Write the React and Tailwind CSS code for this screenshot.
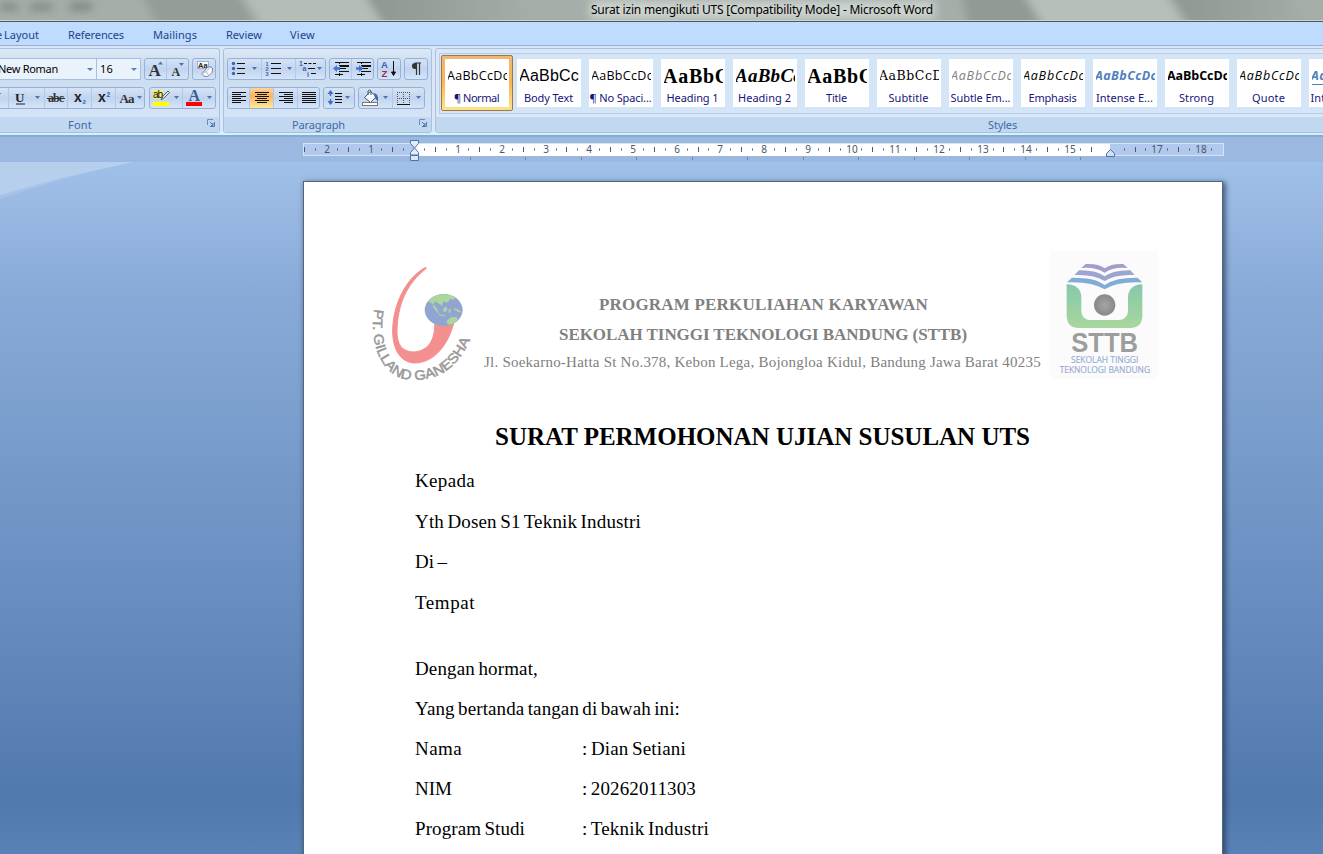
import React, { useLayoutEffect, useRef, useState } from "react";

const UI = "font-['Noto_Sans','Open_Sans',sans-serif]";
const SERIF = "font-['Liberation_Serif',serif]";

/* Text tracked so that it fills a given width. */
function Fit({ w, className = "", children }) {
  const ref = useRef(null);
  const [gap, setGap] = useState(0);
  useLayoutEffect(() => {
    const natural = ref.current.getBoundingClientRect().width;
    setGap((w - natural) / children.length);
  }, []);
  return (
    <span ref={ref} className={"inline-block whitespace-pre " + className} style={{ letterSpacing: gap + "px" }}>
      {children}
    </span>
  );
}

function Tri({ x, y, up }) {
  return <path d={up ? `M${x - 2.5} ${y + 1.5}h5l-2.5 -3z` : `M${x - 2.5} ${y - 1.5}h5l-2.5 3z`} fill="#4a72b0" />;
}

/* A framed strip of tool buttons; the art uses the strip's horizontal coordinates. */
function Cluster({ x, w, dividers = [], active, className = "", children }) {
  return (
    <div
      className={
        "h-[22px] shrink-0 overflow-hidden rounded-[3px] border border-[#93b1dc] bg-linear-to-b from-[#d6e3f4] from-0% via-[#c1d4ef] via-50% to-[#d5e4f7] " + className
      }
      style={{ width: w }}
    >
      <svg className="-ml-px -mt-px block h-[22px]" width={w} viewBox={`${x} 0 ${w} 22`}>
        {active && <rect x={active[0]} y="1" width={active[1]} height="20" fill="url(#glow)" />}
        {dividers.map((d) => (
          <path key={d} d={`M${d + 0.5} 1v20`} stroke="#b0c8ea" />
        ))}
        {children}
      </svg>
    </div>
  );
}

const lines = (rows, stroke = "#111") =>
  rows.map(([x, y, w], i) => <path key={i} d={`M${x} ${y + 0.5}h${w}`} stroke={stroke} />);

function FontGroup() {
  return (
    <Group title="Font" w={220} titleW={24} titlePad="pl-[68px]" launcher first>
      <div className="flex gap-[3px]">
        <div className="flex">
          <div className={"flex h-[22px] w-[97px] items-center border border-l-0 border-[#a5c0e4] bg-[#eaf2fb] text-[11px] text-black " + UI}>
            <Fit w={60} className="ml-[-2px]">New Roman</Fit>
            <svg className="ml-[29px]" width="6" height="5" viewBox="0 0 6 5"><path d="M0 1h6l-3 3z" fill="#5a7fb8" /></svg>
          </div>
          <div className={"flex h-[22px] w-[44px] items-center border border-l-0 border-[#a5c0e4] bg-[#eaf2fb] pl-[3px] text-[11px] text-black " + UI}>
            <Fit w={13}>16</Fit>
            <svg className="ml-[18px]" width="6" height="5" viewBox="0 0 6 5"><path d="M0 1h6l-3 3z" fill="#5a7fb8" /></svg>
          </div>
        </div>
        <Cluster x={144} w={45} dividers={[166]}>
          <text x="148.5" y="17.5" fontFamily="Liberation Serif" fontWeight="700" fontSize="17" fill="#333">A</text>
          <Tri x={160.5} y={5} up />
          <text x="171.5" y="17.5" fontFamily="Liberation Serif" fontWeight="700" fontSize="12" fill="#333">A</text>
          <Tri x={181.5} y={6.5} />
        </Cluster>
        <Cluster x={192} w={24}>
          <rect x="197.500" y="3.500" width="11" height="7" fill="#f5f8fc" stroke="#8a97ad" strokeWidth=".7" />
          <text x="198" y="10" fontFamily="Liberation Sans" fontSize="7.500" fontWeight="700" fill="#222">Aa</text>
          <path d="M202 15.500l5.500-6q4-2 5 1.500t-3.500 6.500q-4.500 3-7-2z" fill="#fafbfd" stroke="#6d7e9b" strokeWidth=".9" />
          <path d="M203 15l3-1.500 2 3M206 13.500l5.500-5" stroke="#a4b2c9" fill="none" />
        </Cluster>
      </div>
      <div className="flex gap-[4px]">
        <Cluster x={-4} w={149} className="ml-[-4px]" dividers={[8, 44, 67, 91, 115]}>
          <text x="-5" y="15.5" fontFamily="Liberation Serif" fontStyle="italic" fontWeight="700" fontSize="14" fill="#222">I</text>
          <text x="15" y="14.5" fontFamily="Liberation Serif" fontWeight="700" fontSize="13" fill="#222">U</text>
          <path d="M16 17h9" stroke="#222" strokeWidth="1" />
          <Tri x={37.5} y={10.5} />
          <text x="48" y="15" fontFamily="Liberation Serif" fontWeight="700" fontSize="12" fill="#333" textLength="16">abc</text>
          <path d="M47 11.5h18" stroke="#333" />
          <text x="74" y="15" fontFamily="Liberation Sans" fontWeight="700" fontSize="14" fill="#222">x</text>
          <text x="82.5" y="16.5" fontFamily="Liberation Sans" fontWeight="700" fontSize="6" fill="#2f5fb5">2</text>
          <text x="98" y="15" fontFamily="Liberation Sans" fontWeight="700" fontSize="14" fill="#222">x</text>
          <text x="106.5" y="9.5" fontFamily="Liberation Sans" fontWeight="700" fontSize="6.5" fill="#2f5fb5">2</text>
          <text x="119.5" y="15.5" fontFamily="Liberation Serif" fontWeight="700" fontSize="13" fill="#333" textLength="15">Aa</text>
          <Tri x={139.5} y={10.5} />
        </Cluster>
        <Cluster x={149} w={67} dividers={[182]}>
          <rect x="153" y="3" width="10" height="9" fill="#f4ee6c" />
          <text x="153" y="10.5" fontFamily="Liberation Sans" fontSize="10" fontWeight="400" fill="#111" textLength="10">ab</text>
          <path d="M161 13l2-4 5-5 1.5 1.5-5 5z" fill="#dfe6ef" stroke="#444f60" strokeWidth=".9" />
          <rect x="153" y="15" width="16" height="4" fill="#ff0" />
          <Tri x={176.5} y={10.5} />
          <text x="188.5" y="13.5" fontFamily="Liberation Serif" fontWeight="700" fontSize="16" fill="#3c5a94">A</text>
          <rect x="186" y="15" width="16" height="4" fill="#f00" />
          <Tri x={209.5} y={10.5} />
        </Cluster>
      </div>
    </Group>
  );
}

function ParagraphGroup() {
  return (
    <Group title="Paragraph" w={209} titleW={53} titlePad="pl-[68px]" launcher className="pl-[3px]">
      <div className="flex gap-[3px]">
        <Cluster x={227} w={99} dividers={[261, 295]}>
          {[5, 10, 15].map((y) => (
            <g key={y}>
              <circle cx="233.5" cy={y + 0.5} r="1.7" fill="#3b64ad" />
              <path d={`M237 ${y + 0.5}h8`} stroke="#111" />
            </g>
          ))}
          <Tri x={254.5} y={10.5} />
          {["1", "2", "3"].map((n, i) => (
            <text key={n} x="265.5" y={7.5 + i * 5} fontFamily="Liberation Sans" fontWeight="700" fontSize="5.5" fill="#3b64ad">{n}</text>
          ))}
          {lines([[271, 5, 10], [271, 10, 10], [271, 15, 10]])}
          <Tri x={289.5} y={10.5} />
          <g fontFamily="Liberation Sans" fontWeight="700" fontSize="7" fill="#3b64ad">
            <text x="299" y="7.5">1</text><text x="302.5" y="13">a</text><text x="307" y="18.5">i</text>
          </g>
          <path d="M304 5.5h12" stroke="#111" strokeDasharray="3 1.500" />
          <path d="M308 10.500h7M311 15.5h5" stroke="#111" />
          <Tri x={319.5} y={10.5} />
        </Cluster>
        <Cluster x={329} w={45} dividers={[351]}>
          {[0, 22].map((d) => (
            <g key={d}>
              {lines([[335 + d, 4, 14], [340 + d, 7, 9], [340 + d, 10, 6], [340 + d, 13, 9], [335 + d, 16, 8]])}
              <path d={`M${339.5 + d} 5v13`} stroke="#111" strokeDasharray="1 1" />
              <path d={`M${340 + d} 7h9v2h-9z`} fill="#111" />
            </g>
          ))}
          <path d="M333 10.5l4-3.5v2.3h3v2.4h-3v2.3z" fill="#4377cf" />
          <path d="M363 10.5l-4-3.5v2.3h-3v2.4h3v2.3z" fill="#4377cf" />
        </Cluster>
        <Cluster x={377} w={24}>
          <text x="381" y="10" fontFamily="Liberation Sans" fontWeight="700" fontSize="9.5" fill="#3b5fae">A</text>
          <text x="381.5" y="18.5" fontFamily="Liberation Sans" fontWeight="700" fontSize="9.5" fill="#9c2f3a">Z</text>
          <path d="M393.5 3v13M391.5 14l2 3.500 2-3.500z" stroke="#111" fill="#111" />
        </Cluster>
        <Cluster x={404} w={24}>
          <path d="M421 5h-6a3 3 0 0 0 0 6h1.500V5z" fill="#333" />
          <path d="M421 5h-6M416.500 5v12M419.500 5v12" stroke="#333" strokeWidth="1.200" fill="none" />
        </Cluster>
      </div>
      <div className="flex gap-[3px]">
        <Cluster x={227} w={93} dividers={[249, 273, 297]} active={[250, 23]}>
          {[5, 7, 9, 11, 13, 15].map((y, i) => {
            const s = i % 2 === 1;
            return <g key={y}>{lines([[232, y, s ? 9 : 14], [s ? 257 : 255, y, s ? 10 : 14], [s ? 284 : 279, y, s ? 9 : 14], [302, y, 14]])}</g>;
          })}
        </Cluster>
        <Cluster x={323} w={32}>
          <path d="M330.500 4v5M330.500 12v5" stroke="#3b6fc8" strokeWidth="1.500" />
          <path d="M327.500 7l3-4 3 4zM327.500 14l3 4 3-4z" fill="#3b6fc8" />
          {lines([[335, 6, 7], [335, 9, 7], [335, 12, 7], [335, 15, 7]])}
          <Tri x={347.5} y={10.5} />
        </Cluster>
        <Cluster x={358} w={67} dividers={[392]}>
          <path d="M364.500 10.500l6-6 6 5-6 6z" fill="#f5f8fc" stroke="#49566b" />
          <path d="M368 8V4q1.500-2 3 0v4" fill="none" stroke="#49566b" />
          <path d="M374 6q5 1 4 9-2-3-3-4z" fill="#3d64ab" />
          <rect x="362.500" y="15.500" width="15" height="3" fill="#fff" stroke="#777" />
          <Tri x={385.5} y={10.5} />
          <path d="M397.500 5v12M403.500 5v12M409.500 5v12M397 5.500h13M397 11.500h13" stroke="#555" strokeDasharray="1 1" />
          <path d="M397 17.500h13" stroke="#111" />
          <Tri x={418.5} y={10.5} />
        </Cluster>
      </div>
    </Group>
  );
}

function Group({ title, w, titleW, titlePad, className = "", launcher, first, children }) {
  return (
    <section
      className={
        "flex h-[85px] shrink-0 flex-col overflow-hidden border border-[#a6c1e2] bg-linear-to-b from-[#dee8f5] from-0% via-[#c9dbef] via-20% to-[#d9e7f7] " +
        (first ? "rounded-r-[3px] border-l-0" : "rounded-[3px]")
      }
      style={{ width: w }}
    >
      <div className={"flex h-[68px] flex-col gap-[7px] pt-[9px] " + className}>{children}</div>
      <div className={"flex h-[15px] items-center bg-[#c1d8f0] text-[11px] text-[#3e6aaa] " + UI + " " + titlePad}>
        <Fit w={titleW} className="mt-[2px]">{title}</Fit>
        {launcher && (
          <svg className="ml-auto mr-[4px] -mt-[3px]" width="8" height="8" viewBox="0 0 8 8">
            <path d="M.5 6V.5H6" stroke="#6a8cbc" fill="none" />
            <path d="M7.500 3v4.500H3M3 3l3 3M6 4v2.500H4" stroke="#5178ae" fill="none" />
          </svg>
        )}
      </div>
    </section>
  );
}

const CAL = "font-['Open_Sans',sans-serif]";
const styles = [
  { n: "¶ Normal", nw: 45, s: "AaBbCcDc", sw: 62, c: "text-[12.5px] text-black " + CAL, sel: true },
  { n: "Body Text", nw: 49, s: "AaBbCc", sw: 60, c: "text-[16px] text-black font-['Liberation_Sans',sans-serif]" },
  { n: "¶ No Spaci...", nw: 62, s: "AaBbCcDc", sw: 62, c: "text-[12.5px] text-black " + CAL },
  { n: "Heading 1", nw: 52, s: "AaBbC", sw: 67, c: "text-[20px] text-black font-bold " + SERIF },
  { n: "Heading 2", nw: 53, s: "AaBbCc", sw: 67, c: "text-[19px] text-black font-bold italic " + SERIF },
  { n: "Title", nw: 21, s: "AaBbC", sw: 67, c: "text-[20px] text-black font-bold " + SERIF },
  { n: "Subtitle", nw: 40, s: "AaBbCcD", sw: 64, c: "text-[12.5px] text-black font-['DejaVu_Serif',serif]" },
  { n: "Subtle Em...", nw: 60, s: "AaBbCcDc", sw: 62, c: "text-[12.5px] italic text-[#808080] " + CAL },
  { n: "Emphasis", nw: 48, s: "AaBbCcDc", sw: 62, c: "text-[12.5px] text-black italic " + CAL },
  { n: "Intense E...", nw: 57, s: "AaBbCcDc", sw: 62, c: "text-[12.5px] font-bold italic text-[#4f81bd] " + CAL },
  { n: "Strong", nw: 35, s: "AaBbCcDc", sw: 62, c: "text-[12.5px] text-black font-bold " + CAL },
  { n: "Quote", nw: 33, s: "AaBbCcDc", sw: 62, c: "text-[12.5px] text-black italic " + CAL },
  { n: "Intense Q...", nw: 60, s: "AaBbCcDc", sw: 62, c: "text-[12.5px] font-bold italic text-[#4f81bd] underline underline-offset-4 " + CAL },
];

function StyleCell({ st }) {
  return (
    <div
      className={
        "h-[56px] w-[72px] shrink-0 " +
        (st.sel ? "rounded-[2px] border border-[#a07848] bg-linear-to-b from-[#eeb878] via-[#fdb44c] to-[#fce48a] p-[3px]" : "p-[4px]")
      }
    >
      <div className="flex h-[48px] w-[64px] flex-col items-center bg-white">
        <div className={"mt-[5px] flex h-[24px] w-[59px] items-center overflow-hidden " + st.c}>
          <Fit w={st.sw} className="ml-[-0.5px]">{st.s}</Fit>
        </div>
        <div className={"mt-[2px] flex h-[16px] items-center text-[11px] text-[#15157a] " + UI}>
          <Fit w={st.nw} className="ml-[-1px]">{st.n}</Fit>
        </div>
      </div>
    </div>
  );
}

function Ruler() {
  const u = 43.7;
  const marks = [];
  for (let q = -10; q <= 73; q++) {
    if (q === 0 || q === 64 || q === 63) continue;
    const x = Math.round(111.5 + (q * u) / 4) - 0.5;
    if (q % 4 === 0) marks.push(<text key={q} x={x + 0.5} y="11" textAnchor="middle">{Math.abs(q / 4)}</text>);
    else if (q % 2 === 0) marks.push(<path key={q} d={`M${x} 5v5`} stroke="#4d5a73" />);
    else marks.push(<path key={q} d={`M${x} 6.500v2`} stroke="#4d5a73" />);
  }
  return (
    <svg className="ml-[303px] mt-[2px] block" width="922" height="24" viewBox="0 -1 922 24">
      <g transform="translate(0 1)">
        <rect x=".5" y="2.500" width="920" height="12" fill="#b0c9ec" stroke="#d3e3f8" />
        <rect x="111" y="3" width="696" height="12" fill="#fff" />
        <g fontFamily="Noto Sans" fontSize="10" fill="#4c566c" transform="translate(0 1)">{marks}</g>
        {Array.from({ length: 12 }, (_, i) => (
          <path key={i} d={`M${Math.round(167 + i * 55.45) + 0.5} 16v3`} stroke="#7d8897" />
        ))}
        <path d="M107.500 -.5h8v3l-4 4.500-4-4.500zM107.500 14v-2.500l4-4.500 4 4.500V14z" fill="#e6ecf5" stroke="#4a74ae" />
        <path d="M107.500 14.500h8v5h-8z" fill="#dfe7f2" stroke="#4a74ae" />
        <path d="M803.500 15.500v-3l4-4 4 4v3z" fill="#d5dfec" stroke="#4a74ae" />
      </g>
    </svg>
  );
}

function GillandLogo() {
  return (
    <svg className="block shrink-0" width="115" height="150" viewBox="0 0 345 450">
      <path d="M197 82C135 115 97 200 98 278C100 340 130 369 166 369C225 367 265 312 281 250L224 254C224 300 205 334 160 336C125 335 111 312 111 275C112 195 140 130 199 85z" fill="#f48f90" stroke="#f48f90" strokeWidth="3" strokeLinejoin="round" />
      <ellipse cx="251" cy="210" rx="57" ry="48" fill="#92a5d2" />
      <g fill="#acd69c">
        <path d="M202 187C215 170 235 162 254 162C268 163 280 167 288 172L280 179L271 177L262 188L250 184L246 198L235 190L225 184L219 194L210 186z" />
        <path d="M218 193l10 9 10 18-5-1-14-18zM235 222l22 4-4 3-18-4zM250 204l9-4 3 9-6 8-7-4zM266 207l7 2-3 11-4-3zM282 204l15 5 8 9-12-3-10-5z" />
        <path d="M261 241l15-11 7 2 6-2 5 11q-12 12-25 14l-9-7z" />
      </g>
      <path id="ring" d="M43 207C25 312 66 420 160 420C258 420 310 362 343 266" fill="none" />
      <text fontFamily="Liberation Sans" fontSize="41" fill="#999" stroke="#999" strokeWidth="1.500">
        <textPath href="#ring" textLength="500" lengthAdjust="spacingAndGlyphs">PT. GILLAND GANESHA</textPath>
      </text>
    </svg>
  );
}

function SttbLogo() {
  return (
    <svg className="mt-[11px] block shrink-0" width="108" height="128" viewBox="30 33 324 384">
      <defs>
        <linearGradient id="green" x1="0" y1="0" x2="0" y2="1"><stop offset="0" stopColor="#86c8ab" /><stop offset="1" stopColor="#a9d79c" /></linearGradient>
        <linearGradient id="label" x1="0" x2="1"><stop offset="0" stopColor="#a5a0cf" /><stop offset=".5" stopColor="#8bb8dc" /><stop offset="1" stopColor="#a3a0cf" /></linearGradient>
        <radialGradient id="ball"><stop offset="0" stopColor="#a5a5a5" /><stop offset="1" stopColor="#888" /></radialGradient>
      </defs>
      <rect x="30" y="33" width="324" height="384" fill="#fbfbfb" />
      <path d="M137 72Q175 70 194 85Q215 70 250 72L263 84Q220 80 194 98Q165 80 124 84z" fill="#a39dcb" />
      <path d="M117 91Q170 90 194 109Q220 90 271 91L284 105Q225 102 194 123Q160 102 103 105z" fill="#9ba4d2" />
      <path d="M96 113Q165 112 194 135Q225 112 292 113L307 127Q230 124 194 148Q155 124 81 127z" fill="#82acd8" />
      <path d="M80 133Q122 135 124 170V214Q126 238 148 240H238Q262 238 264 214V170Q266 135 307 133V232Q304 263 274 264H112Q83 263 80 232z" fill="url(#green)" />
      <circle cx="194" cy="195" r="32" fill="url(#ball)" />
      <text x="94" y="336" fontFamily="Liberation Sans" fontWeight="700" fontSize="82" fill="#9d9d9d" textLength="200" lengthAdjust="spacingAndGlyphs">STTB</text>
      <g fontFamily="Open Sans" fontSize="29" fill="url(#label)" stroke="#9aaed6" strokeWidth=".6">
        <text x="93" y="370" textLength="202" lengthAdjust="spacingAndGlyphs">SEKOLAH TINGGI</text>
        <text x="59" y="400" textLength="271" lengthAdjust="spacingAndGlyphs">TEKNOLOGI BANDUNG</text>
      </g>
    </svg>
  );
}

const Line = ({ w, h, label, value, vw }) => (
  <p className={"flex items-center " + h}>
    <span className={value ? "w-[167px]" : ""}><Fit w={w}>{label}</Fit></span>
    {value && <Fit w={vw}>{value}</Fit>}
  </p>
);

const tabs = [
  ["Layout", 35, "ml-[4px]"],
  ["References", 56, "ml-[29px]"],
  ["Mailings", 44, "ml-[29px]"],
  ["Review", 36, "ml-[29px]"],
  ["View", 25, "ml-[28px]"],
];

export default function App() {
  return (
    <div className="flex h-[854px] w-[1323px] flex-col overflow-hidden bg-[#9cbae2]">
      <svg width="0" height="0" className="absolute">
        <linearGradient id="glow" x1="0" y1="0" x2="0" y2="1"><stop offset="0" stopColor="#fbd3a0" /><stop offset=".4" stopColor="#fcb35c" /><stop offset="1" stopColor="#fdea9c" /></linearGradient>
      </svg>
      <header className="relative flex h-[20px] shrink-0 items-center overflow-hidden bg-[#a5aea8]">
        <svg className="absolute inset-0" width="1323" height="20">
          <defs>
            <filter id="soft" x="-10%" y="-100%" width="120%" height="300%"><feGaussianBlur stdDeviation="4" /></filter>
            <linearGradient id="fade"><stop offset="0" stopColor="#8d9690" /><stop offset="1" stopColor="#a5aea8" /></linearGradient>
          </defs>
          <g filter="url(#soft)">
            <path d="M140 -10h95l25 40H160z" fill="#949d97" />
            <path d="M240 -10h120l25 40H265z" fill="#b4bdb6" />
            <path d="M363 -10h150l25 40H388z" fill="url(#fade)" />
            <path d="M960 -10h60l25 40h-75z" fill="#919a95" />
            <path d="M1022 -10h140l25 40h-140z" fill="#b6bfb9" />
            <path d="M1168 -10h120l25 40h-120z" fill="url(#fade)" />
            <rect x="590" y="1" width="345" height="18" fill="#ced4d0" />
            <path d="M0 4h18v6H0zM30 4h22v6H30zM70 3h22v7H70z" fill="#4f544f" opacity=".5" />
          </g>
        </svg>
        <span className={"relative ml-[591px] text-[12px] text-black " + UI}>
          <Fit w={342}>Surat izin mengikuti UTS [Compatibility Mode] - Microsoft Word</Fit>
        </span>
      </header>
      <div className="h-[2px] shrink-0 border-t border-[#cdd2cf] bg-[#51565a]" />
      <nav className={"flex h-[24px] shrink-0 items-center border-b border-[#8dafe0] bg-[#bfdbff] pt-[4px] text-[11px] text-[#1c4587] " + UI}>
        <span className="w-0"><span className="ml-[-4px]">e</span></span>
        {tabs.map(([t, w, m]) => <span key={t} className={m}><Fit w={w}>{t}</Fit></span>)}
      </nav>
      <div className="flex h-[91px] shrink-0 gap-[3px] border-b-[2px] border-b-[#8ba9cf] bg-linear-to-b from-[#dbe6f4] to-[#d9e7f7] pt-[2px] shadow-[inset_0_-3px_0_#cdf3fb]">
        <FontGroup />
        <ParagraphGroup />
        <section className="flex h-[85px] w-[920px] shrink-0 flex-col overflow-hidden rounded-l-[3px] border border-[#a6c1e2] bg-[#dae7f6]">
          <div className="ml-[3px] mt-[4px] h-[61px] border border-[#b4cdea] bg-[#d4e5f8]">
            <div className="ml-[1px] flex pt-[1px]">
              {styles.map((s) => <StyleCell key={s.n} st={s} />)}
            </div>
          </div>
          <div className={"mt-auto flex h-[15px] shrink-0 items-center bg-[#c1d8f0] pl-[552px] text-[11px] text-[#3e6aaa] " + UI}>
            <Fit w={29} className="mt-[2px]">Styles</Fit>
          </div>
        </section>
      </div>
      <div className="h-[25px] shrink-0 bg-[#9ab8e0]"><Ruler /></div>
      <main className="relative h-[692px] bg-[linear-gradient(#9fc0e8_0%,#9bbbe4_5%,#8aabd8_18%,#7398c8_47%,#6186ba_73%,#5079ae_92%,#5983b6_100%)] pl-[303px] pt-[19px]">
        <svg className="absolute left-0 top-0" width="136" height="38">
          <path d="M0 0h135Q60 16 0 37z" fill="#a7c4e8" />
          <path d="M0 0h133Q60 15 0 33z" fill="#b5cfed" />
        </svg>
        <article className={"relative h-[720px] w-[920px] border border-[#56657a] bg-white text-black shadow-[2px_2px_5px_1px_rgba(30,50,85,0.65)] " + SERIF}>
          <header className="flex pl-[56px] pt-[58px]">
            <GillandLogo />
            <div className="ml-[9px] mr-[9px] flex w-[557px] flex-col items-center pt-[50px] text-[#808080]">
              <p className="flex h-[30px] items-center text-[17px] font-bold"><Fit w={329} className="ml-[2px]">PROGRAM PERKULIAHAN KARYAWAN</Fit></p>
              <p className="flex h-[30px] items-center text-[17px] font-bold"><Fit w={408} className="ml-[1px]">SEKOLAH TINGGI TEKNOLOGI BANDUNG (STTB)</Fit></p>
              <p className="flex h-[25px] items-center text-[15px]"><Fit w={557}>Jl. Soekarno-Hatta St No.378, Kebon Lega, Bojongloa Kidul, Bandung Jawa Barat 40235</Fit></p>
            </div>
            <SttbLogo />
          </header>
          <h1 className="mt-[29px] flex h-[36px] items-center pl-[191px] text-[25px] font-bold"><Fit w={535}>SURAT PERMOHONAN UJIAN SUSULAN UTS</Fit></h1>
          <div className="mt-[6px] pl-[111px] text-[19px] [word-spacing:-1.5px]">
            <Line h="h-[41px]" w={60} label="Kepada" />
            <Line h="h-[41px]" w={226} label="Yth Dosen S1 Teknik Industri" />
            <Line h="h-[39px]" w={32} label="Di –" />
            <Line h="h-[42px]" w={60} label="Tempat" />
            <Line h="mt-[25px] h-[40px]" w={123} label="Dengan hormat," />
            <Line h="h-[40px]" w={265} label="Yang bertanda tangan di bawah ini:" />
            <Line h="h-[40px]" w={47} label="Nama" value=": Dian Setiani" vw={104} />
            <Line h="h-[40px]" w={37} label="NIM" value=": 20262011303" vw={114} />
            <Line h="h-[40px]" w={110} label="Program Studi" value=": Teknik Industri" vw={127} />
          </div>
        </article>
      </main>
    </div>
  );
}
